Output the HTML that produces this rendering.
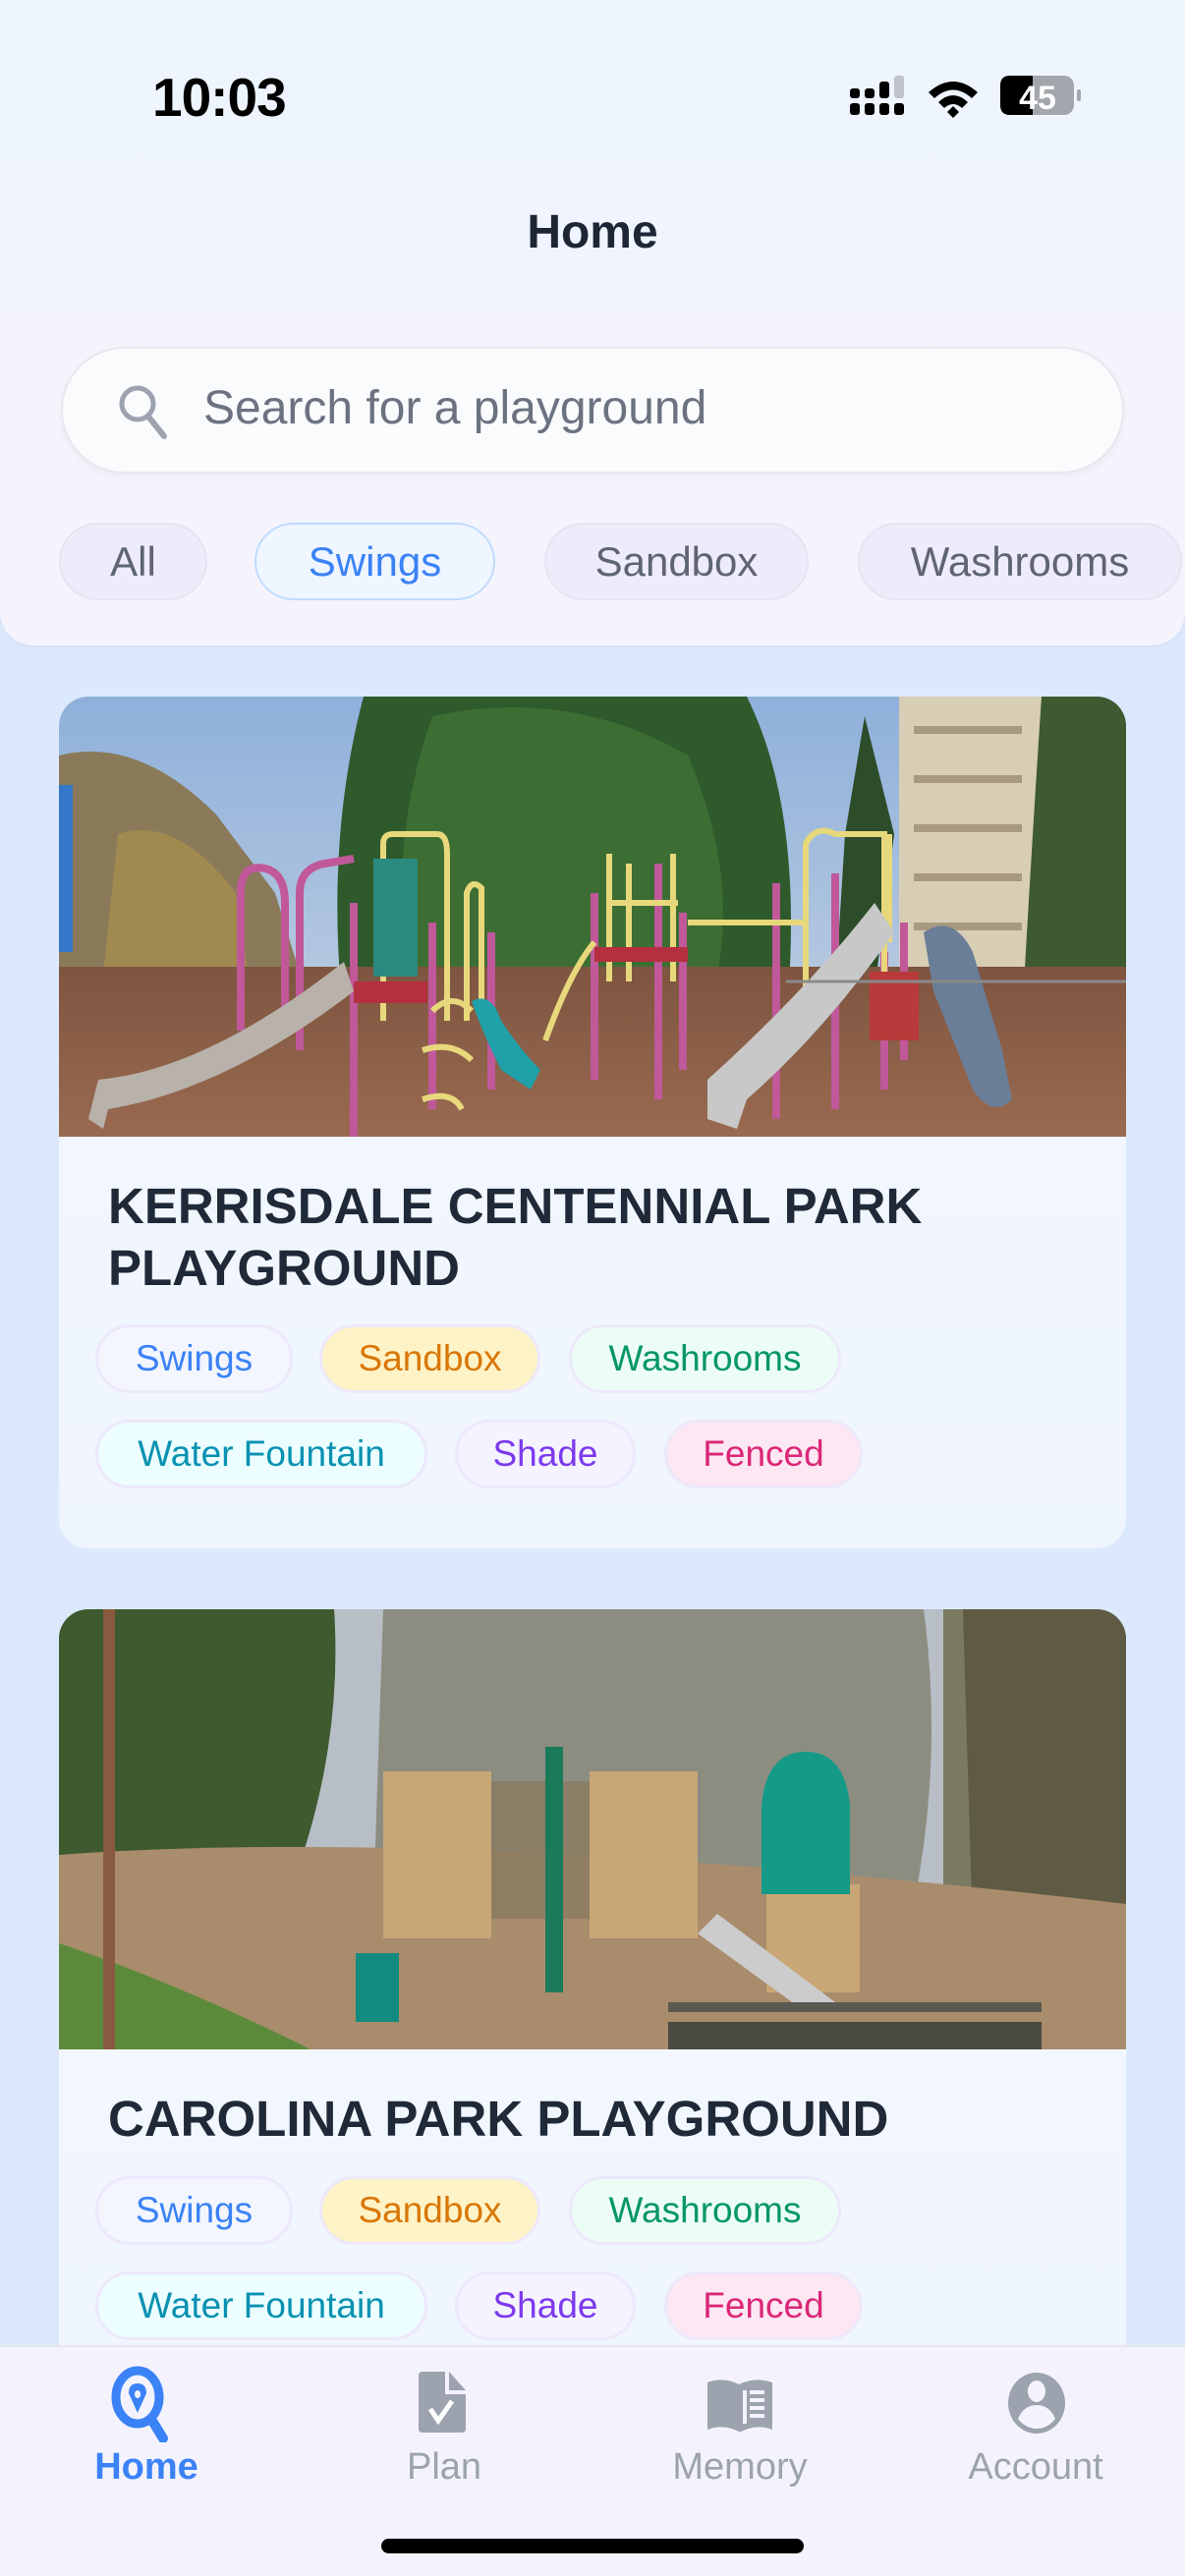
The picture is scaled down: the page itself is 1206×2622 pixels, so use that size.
<!DOCTYPE html>
<html><head><meta charset="utf-8">
<style>
*{margin:0;padding:0;box-sizing:border-box}
body{width:1206px;height:2622px;overflow:hidden;background:#dce9fc;font-family:"Liberation Sans",sans-serif;position:relative}
.abs{position:absolute}
.header{left:0;top:0;width:1206px;height:657px;background:linear-gradient(#eef5ff 0,#eff4fe 290px,#f4f4fd 330px,#f5f4fd 657px);border-radius:0 0 34px 34px;box-shadow:0 2px 4px rgba(0,0,0,.04)}
.time{left:155px;top:67px;font-size:55px;font-weight:bold;color:#000;letter-spacing:-1px}
.title{left:0;width:1206px;top:209px;text-align:center;font-size:48px;font-weight:bold;color:#1e2636}
.search{left:62px;top:353px;width:1082px;height:129px;border-radius:65px;background:#fafbfd;border:2px solid #e6e8ee;box-shadow:0 3px 8px rgba(0,0,0,.04)}
.stext{left:207px;top:388px;font-size:48px;color:#6b7280}
.chip{position:absolute;top:532px;height:79px;border-radius:40px;background:#eeebfb;border:2px solid #e6e4f0;color:#5f6472;font-size:42px;display:flex;align-items:center;justify-content:center}
.card{position:absolute;left:60px;width:1086px;background:linear-gradient(#f5f8fe,#eff5fe);border-radius:30px;overflow:hidden}
.ctitle{position:absolute;left:50px;font-size:51px;font-weight:bold;color:#1f2937;line-height:63px}
.tag{position:absolute;height:70px;border-radius:35px;border:3px solid #ede8fb;font-size:37px;display:flex;align-items:center;justify-content:center}
.t1{background:#f3f6fe;color:#3b82f6}.t2{background:#fef3c7;color:#d97706}.t3{background:#ecfdf5;color:#059669}
.t4{background:#ecfeff;color:#0891b2}.t5{background:#f5f3ff;color:#7c3aed}.t6{background:#fce7f3;color:#db2777}
.tabbar{left:0;top:2387px;width:1206px;height:235px;background:#f4f3fd;border-top:2px solid #e5e6ef}
.tl{position:absolute;top:2490px;font-size:38px;color:#9ca3af;text-align:center;width:220px}
</style></head><body>
<div class="abs header"></div>
<div class="abs time">10:03</div>
<svg class="abs" style="left:860px;top:74px" width="240" height="48" viewBox="0 0 240 48">
 <g fill="#000">
  <rect x="5" y="16" width="10" height="10" rx="3"/><rect x="5" y="31" width="10" height="12" rx="3"/>
  <rect x="20" y="16" width="10" height="10" rx="3"/><rect x="20" y="31" width="10" height="12" rx="3"/>
  <rect x="35" y="9" width="10" height="17" rx="3"/><rect x="35" y="31" width="10" height="12" rx="3"/>
  <rect x="50" y="31" width="10" height="12" rx="3"/>
 </g>
 <rect x="50" y="3" width="10" height="23" rx="3" fill="#bfc3cc"/>
 <path d="M85 20 Q110 -2 135 20 L129 26 Q110 9 91 26 Z M95 30 Q110 16 125 30 L119 36 Q110 28 101 36 Z M104 40 L110 34 L116 40 L110 46 Z" fill="#000"/>
 <rect x="158" y="3" width="75" height="40" rx="10" fill="#a3a6ad"/>
 <path d="M168 3 H191 V43 H168 Q158 43 158 33 V13 Q158 3 168 3Z" fill="#000"/>
 <rect x="236" y="17" width="4" height="12" rx="2" fill="#a3a6ad"/>
 <text x="196" y="37" text-anchor="middle" font-family="Liberation Sans" font-weight="bold" font-size="34" fill="#fff">45</text>
</svg>
<div class="abs title">Home</div>
<div class="abs search"></div>
<svg class="abs" style="left:118px;top:388px" width="56" height="60" viewBox="0 0 56 60"><circle cx="22" cy="23" r="16" fill="none" stroke="#9ca3af" stroke-width="5"/><path d="M33 36 L49 56" stroke="#9ca3af" stroke-width="6" stroke-linecap="round"/></svg>
<div class="abs stext">Search for a playground</div>
<div class="chip" style="left:60px;width:151px">All</div>
<div class="chip" style="left:259px;width:245px;background:#eff6ff;border-color:#bfdbfe;color:#3b82f6">Swings</div>
<div class="chip" style="left:554px;width:269px">Sandbox</div>
<div class="chip" style="left:873px;width:330px">Washrooms</div>

<div class="card" style="top:709px;height:867px">
 <svg width="1086" height="448" viewBox="0 0 1086 448" style="display:block">
  <defs><linearGradient id="sky" x1="0" y1="0" x2="0" y2="1"><stop offset="0" stop-color="#8fb0db"/><stop offset="1" stop-color="#c9d5e2"/></linearGradient>
  <linearGradient id="gr" x1="0" y1="0" x2="0" y2="1"><stop offset="0" stop-color="#7e5540"/><stop offset="1" stop-color="#9a6a50"/></linearGradient></defs>
  <rect width="1086" height="448" fill="url(#sky)"/>
  <path d="M0 60 Q80 40 160 120 L220 200 L260 330 L0 330Z" fill="#8a7a5a"/>
  <path d="M60 140 Q120 120 180 200 L200 330 L40 330Z" fill="#a08a50"/>
  <rect x="855" y="0" width="145" height="330" fill="#d8cdb5"/>
  <g fill="#a89a80"><rect x="870" y="30" width="110" height="8"/><rect x="870" y="80" width="110" height="8"/><rect x="870" y="130" width="110" height="8"/><rect x="870" y="180" width="110" height="8"/><rect x="870" y="230" width="110" height="8"/></g>
  <path d="M1000 0 H1086 V330 H980 Q990 150 1000 0Z" fill="#3d5a30"/>
  <path d="M310 0 H700 Q760 120 740 330 H290 Q270 150 310 0Z" fill="#2f5a2c"/>
  <path d="M380 20 Q520 -10 640 60 Q700 200 660 320 H360 Q330 160 380 20Z" fill="#3c6e34"/>
  <path d="M820 20 L850 140 L830 300 L790 300 L800 140Z" fill="#2d4d2a"/>
  <rect x="0" y="275" width="1086" height="173" fill="url(#gr)"/>
  <rect x="0" y="90" width="14" height="170" fill="#3577c8"/>
  <g fill="none" stroke="#c0589a" stroke-width="8">
   <path d="M185 340 V200 Q185 170 210 175 Q230 180 230 210 V330"/>
   <path d="M245 360 V200 Q245 175 270 170 L300 165"/>
   <path d="M300 450 V210 M380 420 V230 M440 400 V240"/>
   <path d="M545 390 V200 M610 410 V170 M635 380 V220"/>
   <path d="M730 430 V190 M790 420 V180 M840 400 V260 M860 370 V230"/>
  </g>
  <g fill="none" stroke="#e8d87c" stroke-width="6">
   <path d="M330 330 V150 Q330 140 340 140 H385 Q395 140 395 160 V330"/>
   <path d="M415 330 V200 Q420 185 430 195 V330"/>
   <path d="M560 290 V160 M580 290 V170 M625 290 V160 M560 210 H630"/>
   <path d="M495 350 Q520 280 545 250"/>
   <path d="M640 230 H760 M760 300 V150 Q770 130 790 140 H840 V300"/>
   <path d="M845 250 V140"/>
   <path d="M370 410 Q400 400 410 420 M370 360 Q400 350 420 370 M380 320 Q400 300 420 320"/>
  </g>
  <rect x="300" y="290" width="75" height="22" fill="#b43040"/>
  <rect x="545" y="255" width="95" height="15" fill="#b43040"/>
  <rect x="825" y="280" width="50" height="70" fill="#b83a3a"/>
  <rect x="320" y="165" width="45" height="120" fill="#2a8a80"/>
  <path d="M30 430 L40 390 Q150 380 290 270 L300 300 Q170 400 50 420 L45 440Z" fill="#b8b2aa"/>
  <path d="M660 430 L660 390 Q760 300 830 210 L850 240 Q780 340 700 410 L690 440Z" fill="#c8c8c8"/>
  <path d="M880 240 Q910 220 930 260 L960 360 L970 410 Q950 430 930 400 L890 300Z" fill="#6a7e98"/>
  <path d="M420 310 Q440 300 450 330 Q470 360 490 380 L480 400 L450 380 Q430 340 420 310Z" fill="#20a0a8"/>
  <path d="M740 290 H1086" stroke="#8a8a8a" stroke-width="3"/>
 </svg>
 <div class="ctitle" style="top:487px">KERRISDALE CENTENNIAL PARK<br>PLAYGROUND</div>
 <div class="tag t1" style="left:37px;top:639px;width:201px">Swings</div>
 <div class="tag t2" style="left:265px;top:639px;width:225px">Sandbox</div>
 <div class="tag t3" style="left:519px;top:639px;width:277px">Washrooms</div>
 <div class="tag t4" style="left:37px;top:736px;width:338px">Water Fountain</div>
 <div class="tag t5" style="left:403px;top:736px;width:184px">Shade</div>
 <div class="tag t6" style="left:616px;top:736px;width:202px">Fenced</div>
</div>

<div class="card" style="top:1638px;height:900px">
 <svg width="1086" height="448" viewBox="0 0 1086 448" style="display:block">
  <rect width="1086" height="448" fill="#7a7a62"/>
  <rect x="250" y="0" width="650" height="280" fill="#b8bec6"/>
  <path d="M0 0 H280 Q290 150 230 300 H0Z" fill="#3e5a2e"/>
  <path d="M330 0 H880 Q900 150 870 300 H320Z" fill="#6e6c54" opacity=".6"/>
  <path d="M920 0 H1086 V330 H930Z" fill="#5e5a44"/>
  <path d="M0 250 Q400 220 1086 300 V448 H0Z" fill="#a98c6c"/>
  <path d="M0 340 Q120 380 260 450 H0Z" fill="#5b8a3a"/>
  <rect x="45" y="0" width="12" height="448" fill="#8a5a40"/>
  <g fill="#c9a676"><rect x="330" y="165" width="110" height="170"/><rect x="540" y="165" width="110" height="170"/><rect x="720" y="280" width="95" height="110"/></g>
  <rect x="440" y="175" width="100" height="140" fill="#8a7a60" opacity=".8"/>
  <path d="M715 290 V200 Q720 145 760 145 Q800 145 805 200 V290Z" fill="#149a86"/>
  <rect x="495" y="140" width="18" height="250" fill="#1a7a5a"/>
  <rect x="302" y="350" width="44" height="70" fill="#128a80"/>
  <path d="M650 330 L760 410 L790 400 L670 310Z" fill="#ccc"/>
  <rect x="620" y="420" width="380" height="28" fill="#4a4a42"/>
  <rect x="620" y="400" width="380" height="10" fill="#5a5a50"/>
 </svg>
 <div class="ctitle" style="top:487px">CAROLINA PARK PLAYGROUND</div>
 <div class="tag t1" style="left:37px;top:577px;width:201px">Swings</div>
 <div class="tag t2" style="left:265px;top:577px;width:225px">Sandbox</div>
 <div class="tag t3" style="left:519px;top:577px;width:277px">Washrooms</div>
 <div class="tag t4" style="left:37px;top:674px;width:338px">Water Fountain</div>
 <div class="tag t5" style="left:403px;top:674px;width:184px">Shade</div>
 <div class="tag t6" style="left:616px;top:674px;width:202px">Fenced</div>
</div>

<div class="abs tabbar"></div>
<svg class="abs" style="left:110px;top:2406px" width="80" height="80" viewBox="0 0 80 80">
 <ellipse cx="30" cy="34" rx="22" ry="27" fill="none" stroke="#3b82f6" stroke-width="9"/>
 <path d="M30 20 Q39 20 39 30 L30 50 L21 30 Q21 20 30 20Z M30 27 a3 4 0 1 0 0.1 0Z" fill="#3b82f6" fill-rule="evenodd"/>
 <path d="M45 58 L56 76" stroke="#3b82f6" stroke-width="10" stroke-linecap="round"/>
</svg>
<svg class="abs" style="left:426px;top:2414px" width="52" height="64" viewBox="0 0 52 64">
 <path d="M4 0 H27 V23 H48 V58 Q48 62 44 62 H4 Q0 62 0 58 V4 Q0 0 4 0Z M31 0 L48 19 H31Z" fill="#9ca3af"/>
 <path d="M12 38 L20 50 L34 30" fill="none" stroke="#fff" stroke-width="5"/>
</svg>
<svg class="abs" style="left:718px;top:2421px" width="70" height="56" viewBox="0 0 70 56">
 <path d="M2 4 Q18 -2 34 6 Q50 -2 68 4 V52 Q52 46 36 54 H34 Q18 46 2 52Z" fill="#9ca3af"/>
 <path d="M40 12 V46 M45 14 H60 M45 22 H60 M45 30 H60 M45 38 H60" stroke="#f4f3fd" stroke-width="4" fill="none"/>
</svg>
<svg class="abs" style="left:1024px;top:2414px" width="62" height="64" viewBox="0 0 62 64">
 <ellipse cx="31" cy="32" rx="29" ry="31" fill="#9ca3af"/>
 <ellipse cx="31" cy="20" rx="9" ry="11" fill="#f4f3fd"/>
 <path d="M12 48 Q18 34 31 34 Q44 34 50 48 Q42 58 31 58 Q20 58 12 48Z" fill="#f4f3fd"/>
</svg>
<div class="tl" style="left:39px;color:#3b82f6;font-weight:bold">Home</div>
<div class="tl" style="left:342px">Plan</div>
<div class="tl" style="left:643px">Memory</div>
<div class="tl" style="left:944px">Account</div>
<div class="abs" style="left:388px;top:2584px;width:430px;height:15px;border-radius:8px;background:#000"></div>
</body></html>
